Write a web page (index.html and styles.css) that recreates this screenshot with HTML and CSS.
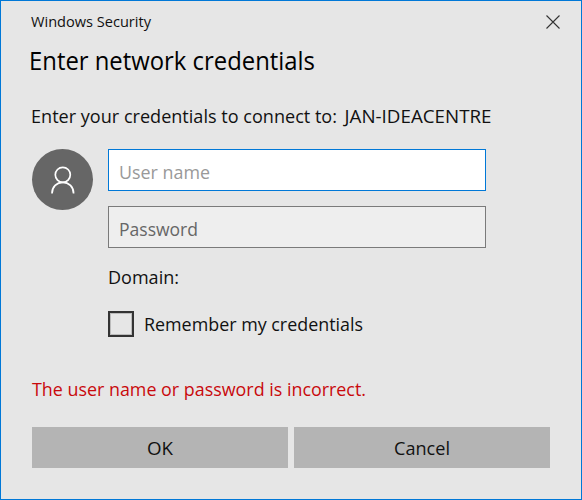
FILE: index.html
```html
<!DOCTYPE html>
<html lang="en">
<head>
<meta charset="utf-8">
<title>Windows Security</title>
<link rel="stylesheet" href="styles.css">
</head>
<body>
<main class="dialog">
  <header class="titlebar">
    <svg class="caption" width="122" height="22"><text x="0" y="16.500" textLength="120" lengthAdjust="spacingAndGlyphs">Windows Security</text></svg>
    <svg class="close" width="14" height="14" viewBox="0 0 14 14"><path d="M.5.5l13 13M13.500.5L.5 13.500"/></svg>
  </header>
  <svg class="heading" width="300" height="36"><text x="-3" y="26" textLength="286" lengthAdjust="spacingAndGlyphs">Enter network credentials</text></svg>
  <svg class="message" width="470" height="28"><text x="-1" y="20.500" textLength="306" lengthAdjust="spacingAndGlyphs">Enter your credentials to connect to:</text><text x="312.500" y="20.500" textLength="147" lengthAdjust="spacingAndGlyphs">JAN-IDEACENTRE</text></svg>
  <section class="account">
    <div class="avatar"><svg width="26" height="30" viewBox="0 0 26 30"><circle cx="12.800" cy="9.800" r="7.500"/><path d="M2 28.500c0-6.500 4.800-11.200 10.800-11.200s10.800 4.700 10.800 11.200"/></svg></div>
    <div class="fields">
      <div class="field active"><svg width="200" height="28"><text x="-1" y="21" textLength="91" lengthAdjust="spacingAndGlyphs">User name</text></svg></div>
      <div class="field"><svg width="200" height="28"><text x="-1" y="21" textLength="79" lengthAdjust="spacingAndGlyphs">Password</text></svg></div>
      <svg class="domain" width="100" height="28"><text x="0" y="21" textLength="71" lengthAdjust="spacingAndGlyphs">Domain:</text></svg>
      <div class="remember"><span class="checkbox"></span><svg width="230" height="28"><text x="0" y="21" textLength="219" lengthAdjust="spacingAndGlyphs">Remember my credentials</text></svg></div>
    </div>
  </section>
  <svg class="error" width="350" height="28"><text x="0" y="20" textLength="334" lengthAdjust="spacingAndGlyphs">The user name or password is incorrect.</text></svg>
  <footer class="actions">
    <div class="button"><svg width="26" height="28"><text x="0" y="21" textLength="26" lengthAdjust="spacingAndGlyphs">OK</text></svg></div>
    <div class="button"><svg width="56" height="28"><text x="0" y="21" textLength="56" lengthAdjust="spacingAndGlyphs">Cancel</text></svg></div>
  </footer>
</main>
</body>
</html>
```
FILE: styles.css
```css
* { box-sizing: border-box; }
body { margin: 0; }
svg { display: block; overflow: visible; flex: none; }
text { fill: currentColor; }
.dialog { width: 582px; height: 500px; background: #e6e6e6; border: 1px solid #0078d7; padding: 9px 30px 30px 31px; display: flex; flex-direction: column; font: 18.8px "Open Sans", sans-serif; color: #111; }
.titlebar { display: flex; justify-content: space-between; height: 34px; font-size: 14.8px; }
.caption { margin-left: -1px; }
.close { margin: 5px -9px 0 0; fill: none; stroke: #333; stroke-width: 1.1; }
.heading { font-size: 25px; color: #000; }
.message { margin-top: 22px; }
.account { display: flex; gap: 15px; margin-top: 19px; }
.avatar { width: 61px; height: 61px; border-radius: 50%; background: #666; display: flex; align-items: center; justify-content: center; }
.avatar svg { fill: none; stroke: #fff; stroke-width: 1.7; }
.fields { width: 378px; }
.field { height: 42px; border: 1px solid #7a7a7a; background: #eee; margin-bottom: 15px; padding: 8px 11px; color: #666; }
.active { border-color: #0078d7; background: #fff; color: #999; }
.domain { margin-top: 15px; }
.remember { display: flex; gap: 10px; align-items: center; margin-top: 19px; }
.checkbox { width: 26px; height: 26px; border: 2px solid #333; box-shadow: inset 0 0 0 1px #bbb; }
.error { color: #c9090c; margin-top: 38px; }
.actions { display: grid; grid-template-columns: 256px 256px; gap: 6px; margin-top: 23px; }
.button { height: 41px; background: #b4b4b4; display: flex; align-items: center; justify-content: center; }
```
